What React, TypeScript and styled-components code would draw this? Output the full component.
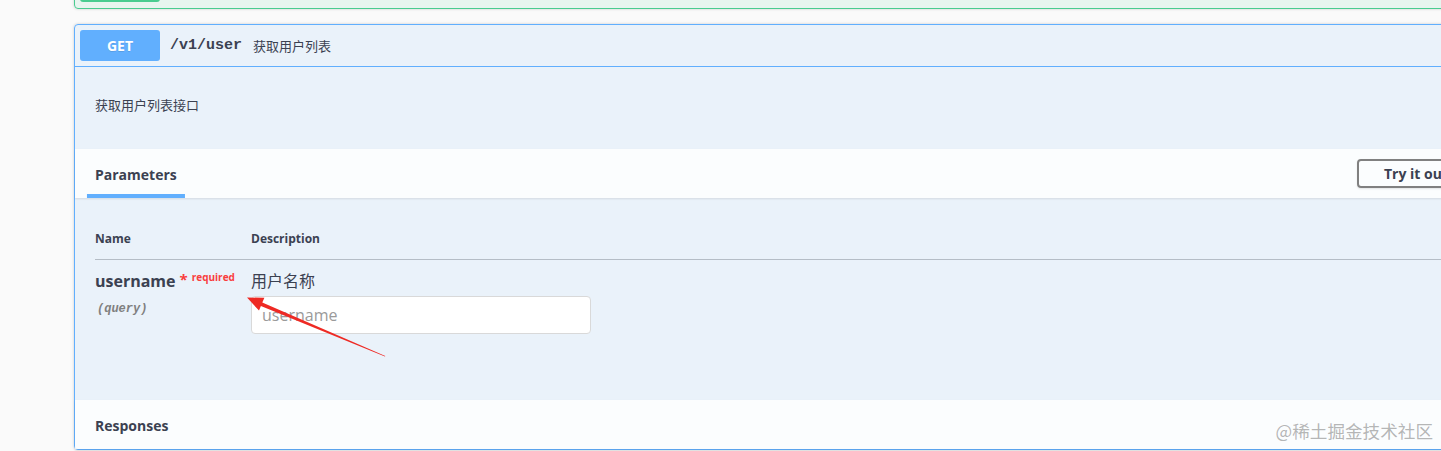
import React from 'react';
import styled, { createGlobalStyle } from 'styled-components';

const GlobalStyle = createGlobalStyle`
  html, body {
    margin: 0;
    padding: 0;
    overflow: hidden;
    background: #fafafa;
  }
  body {
    font-family: "Open Sans", "Noto Sans CJK SC", sans-serif;
    color: #3b4151;
  }
`;

const Page = styled.div`
  position: relative;
  width: 1441px;
  height: 451px;
  overflow: hidden;
  padding-left: 74px;
  box-sizing: border-box;
`;

const OpBlock = styled.div<{ $color: string; $tint: string }>`
  width: 1422px;
  box-sizing: border-box;
  border: 1px solid ${(p) => p.$color};
  background: ${(p) => p.$tint};
  border-radius: 4px;
  box-shadow: 0 0 3px rgba(0, 0, 0, 0.19);
`;

const PrevBlock = styled(OpBlock)`
  margin-top: -35px;
  margin-bottom: 15px;
`;

const Summary = styled.div<{ $color: string }>`
  display: flex;
  align-items: center;
  padding: 5px;
  border-bottom: 1px solid ${(p) => p.$color};
`;

const MethodBadge = styled.span<{ $color: string }>`
  display: flex;
  align-items: center;
  justify-content: center;
  width: 80px;
  height: 31px;
  border-radius: 3px;
  background: ${(p) => p.$color};
  color: #fff;
  font-size: 14px;
  font-weight: 700;
  text-shadow: 0 1px 0 rgba(0, 0, 0, 0.1);
`;

const Path = styled.span`
  margin-left: 10px;
  font-family: "Liberation Mono", "Courier New", monospace;
  font-size: 15px;
  font-weight: 700;
  color: #3b4151;
`;

const SummaryDesc = styled.span`
  margin-left: 11px;
  font-size: 13px;
  color: #3b4151;
`;

const Description = styled.div`
  padding: 28px 20px 34px;
  font-size: 13px;
  line-height: 20px;
  color: #3b4151;
`;

const SectionHeader = styled.div`
  display: flex;
  align-items: center;
  justify-content: space-between;
  height: 49px;
  padding: 0 20px;
  background: rgba(255, 255, 255, 0.8);
  box-shadow: 0 1px 2px rgba(0, 0, 0, 0.1);
`;

const Tab = styled.div<{ $active?: boolean }>`
  position: relative;
  height: 100%;
  display: flex;
  align-items: center;
  padding-top: 2px;
  box-sizing: border-box;
  font-size: 14px;
  font-weight: 700;
  color: #3b4151;

  &::after {
    content: '';
    display: ${(p) => (p.$active ? 'block' : 'none')};
    position: absolute;
    bottom: 0;
    left: 50%;
    transform: translateX(-50%);
    width: 120%;
    height: 4px;
    background: #61affe;
  }
`;

const TryButton = styled.button`
  height: 29px;
  padding: 0 25px;
  border: 2px solid #808080;
  border-radius: 4px;
  background: transparent;
  font-family: inherit;
  font-size: 14px;
  font-weight: 700;
  color: #3b4151;
  box-shadow: 0 1px 2px rgba(0, 0, 0, 0.1);
`;

const TableWrap = styled.div`
  padding: 20px 0 66px 20px;
`;

const HeadRow = styled.div`
  display: grid;
  grid-template-columns: 156px 1fr;
  padding: 12px 0;
  border-bottom: 1px solid rgba(59, 65, 81, 0.3);
  font-size: 12px;
  font-weight: 700;
  line-height: 17px;
`;

const ParamRow = styled.div`
  display: grid;
  grid-template-columns: 156px 1fr;
  padding-top: 10px;
`;

const ParamName = styled.div`
  font-size: 16px;
  font-weight: 700;
  line-height: 22px;
  color: #3b4151;
`;

const Required = styled.span`
  position: relative;
  top: -2px;
  margin-left: 4px;
  color: #f93e3e;
  font-size: 15px;
  font-weight: 700;

  & > small {
    position: relative;
    top: -4px;
    margin-left: 4px;
    font-size: 10px;
  }
`;

const ParamIn = styled.div`
  margin-top: 8px;
  padding-left: 2px;
  font-family: "Liberation Mono", "Courier New", monospace;
  font-size: 12px;
  font-style: italic;
  font-weight: 700;
  color: #808080;
`;

const ParamDesc = styled.div`
  font-size: 16px;
  line-height: 22px;
  color: #3b4151;
`;

const ParamInput = styled.input`
  display: block;
  margin-top: 4px;
  width: 340px;
  height: 38px;
  box-sizing: border-box;
  padding: 8px 10px;
  border: 1px solid #d9d9d9;
  border-radius: 4px;
  background: #fff;
  font-family: "Open Sans", "Noto Sans CJK SC", sans-serif;
  font-size: 16px;
  outline: none;

  &::placeholder {
    color: #9a9a9a;
  }
`;

const Watermark = styled.div`
  position: absolute;
  right: 8px;
  bottom: 8px;
  font-family: "Noto Sans CJK SC", sans-serif;
  font-size: 17.6px;
  color: rgba(120, 120, 120, 0.55);
`;

const Arrow = styled.svg`
  position: absolute;
  left: 0;
  top: 0;
  pointer-events: none;
`;

const App: React.FC = () => {
  return (
    <Page>
      <GlobalStyle />
      <PrevBlock $color="#49cc90" $tint="rgba(73, 204, 144, 0.1)">
        <Summary $color="transparent">
          <MethodBadge $color="#49cc90" />
        </Summary>
      </PrevBlock>

      <OpBlock $color="#61affe" $tint="rgba(97, 175, 254, 0.1)">
        <Summary $color="#61affe">
          <MethodBadge $color="#61affe">GET</MethodBadge>
          <Path>/v1/user</Path>
          <SummaryDesc>获取用户列表</SummaryDesc>
        </Summary>

        <Description>获取用户列表接口</Description>

        <SectionHeader>
          <Tab $active>Parameters</Tab>
          <TryButton>Try it out</TryButton>
        </SectionHeader>

        <TableWrap>
          <HeadRow>
            <span>Name</span>
            <span>Description</span>
          </HeadRow>
          <ParamRow>
            <div>
              <ParamName>
                username
                <Required>
                  *<small>required</small>
                </Required>
              </ParamName>
              <ParamIn>(query)</ParamIn>
            </div>
            <div>
              <ParamDesc>用户名称</ParamDesc>
              <ParamInput placeholder="username" />
            </div>
          </ParamRow>
        </TableWrap>

        <SectionHeader>
          <Tab>Responses</Tab>
        </SectionHeader>
      </OpBlock>

      <Arrow width="1441" height="451" viewBox="0 0 1441 451">
        <polygon
          points="247,297.5 264.4,297.8 262.3,302.4 385.3,356 384.9,356.4 260.9,306 259,310.6"
          fill="#ee2a24"
        />
      </Arrow>

      <Watermark>@稀土掘金技术社区</Watermark>
    </Page>
  );
};

export default App;
